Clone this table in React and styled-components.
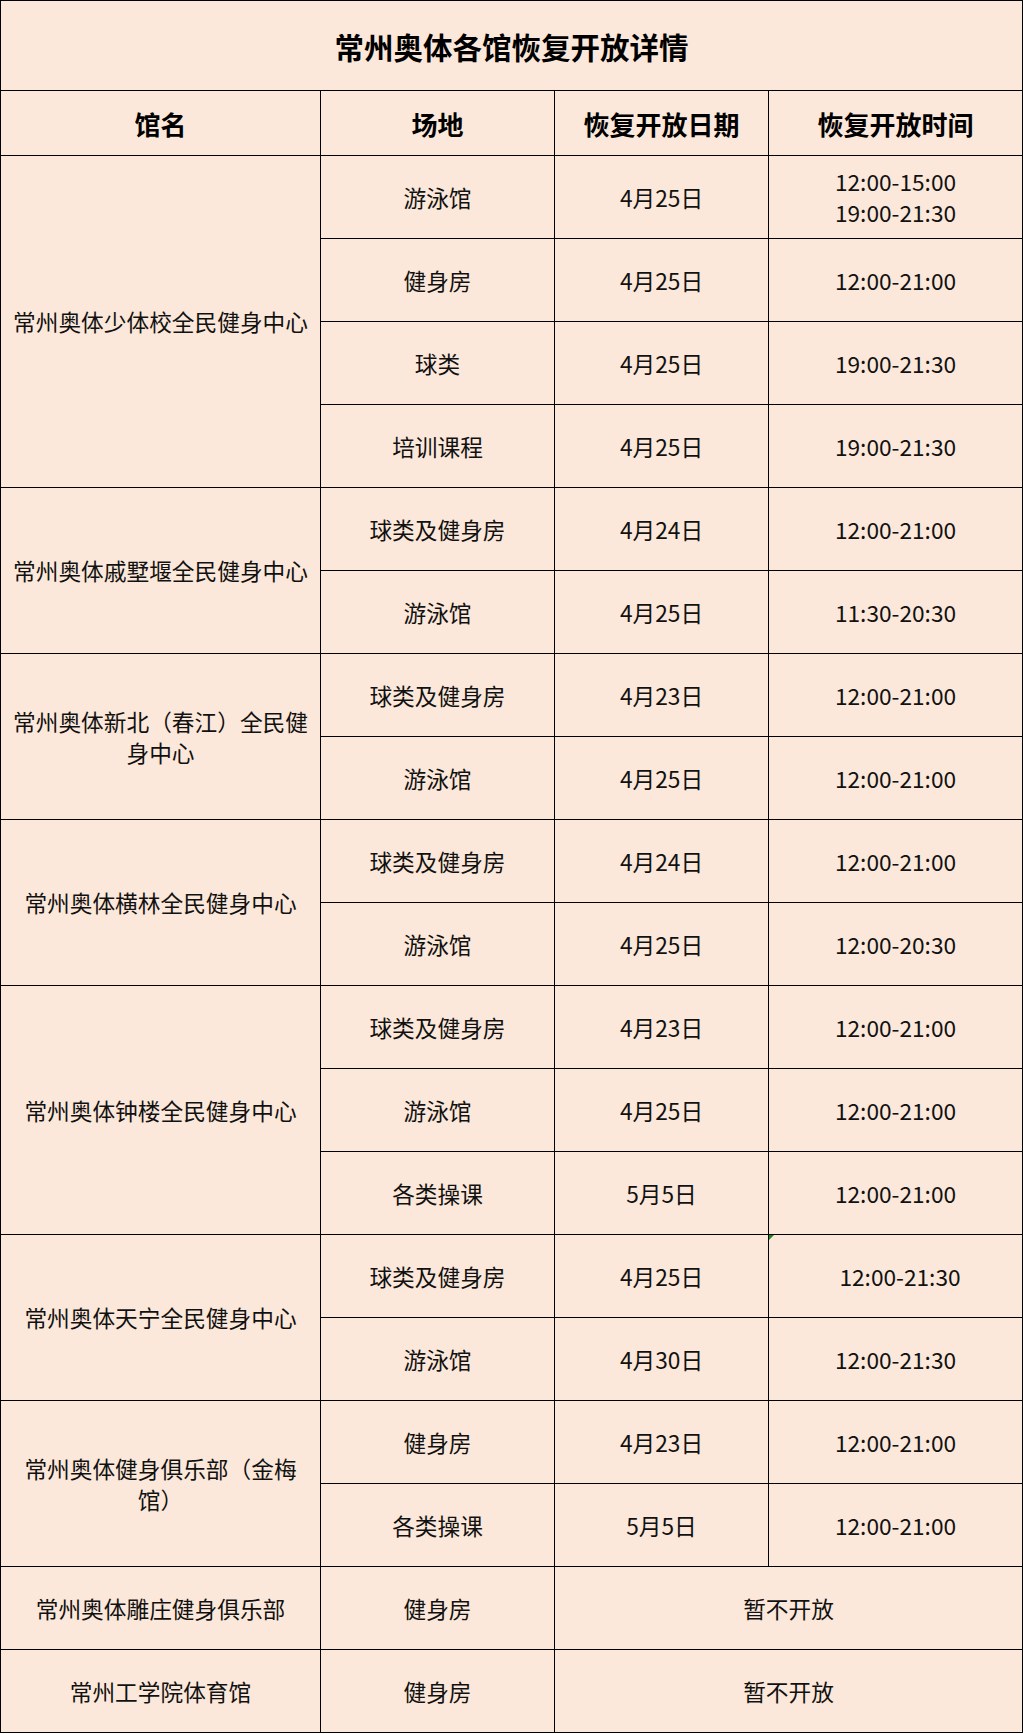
import React from "react";
import styled, { createGlobalStyle } from "styled-components";

const venues = [
  {
    name: "常州奥体少体校全民健身中心",
    rows: [
      { place: "游泳馆", date: "4月25日", time: ["12:00-15:00", "19:00-21:30"] },
      { place: "健身房", date: "4月25日", time: ["12:00-21:00"] },
      { place: "球类", date: "4月25日", time: ["19:00-21:30"] },
      { place: "培训课程", date: "4月25日", time: ["19:00-21:30"] },
    ],
  },
  {
    name: "常州奥体戚墅堰全民健身中心",
    rows: [
      { place: "球类及健身房", date: "4月24日", time: ["12:00-21:00"] },
      { place: "游泳馆", date: "4月25日", time: ["11:30-20:30"] },
    ],
  },
  {
    name: "常州奥体新北（春江）全民健身中心",
    rows: [
      { place: "球类及健身房", date: "4月23日", time: ["12:00-21:00"] },
      { place: "游泳馆", date: "4月25日", time: ["12:00-21:00"] },
    ],
  },
  {
    name: "常州奥体横林全民健身中心",
    rows: [
      { place: "球类及健身房", date: "4月24日", time: ["12:00-21:00"] },
      { place: "游泳馆", date: "4月25日", time: ["12:00-20:30"] },
    ],
  },
  {
    name: "常州奥体钟楼全民健身中心",
    rows: [
      { place: "球类及健身房", date: "4月23日", time: ["12:00-21:00"] },
      { place: "游泳馆", date: "4月25日", time: ["12:00-21:00"] },
      { place: "各类操课", date: "5月5日", time: ["12:00-21:00"] },
    ],
  },
  {
    name: "常州奥体天宁全民健身中心",
    rows: [
      { place: "球类及健身房", date: "4月25日", time: ["12:00-21:30"], marked: true },
      { place: "游泳馆", date: "4月30日", time: ["12:00-21:30"] },
    ],
  },
  {
    name: "常州奥体健身俱乐部（金梅馆）",
    rows: [
      { place: "健身房", date: "4月23日", time: ["12:00-21:00"] },
      { place: "各类操课", date: "5月5日", time: ["12:00-21:00"] },
    ],
  },
  {
    name: "常州奥体雕庄健身俱乐部",
    rows: [{ place: "健身房", closed: "暂不开放" }],
  },
  {
    name: "常州工学院体育馆",
    rows: [{ place: "健身房", closed: "暂不开放" }],
  },
];

const App = () => {
  return (
    <>
      <GlobalStyle />
      <Table>
        <colgroup>
          <col style={{ width: 320 }} />
          <col style={{ width: 234 }} />
          <col style={{ width: 214 }} />
          <col style={{ width: 254 }} />
        </colgroup>
        <thead>
          <TitleRow>
            <TitleCell colSpan={4}>常州奥体各馆恢复开放详情</TitleCell>
          </TitleRow>
          <HeadRow>
            <HeadCell>馆名</HeadCell>
            <HeadCell>场地</HeadCell>
            <HeadCell>恢复开放日期</HeadCell>
            <HeadCell>恢复开放时间</HeadCell>
          </HeadRow>
        </thead>
        <tbody>
          {venues.map((venue) =>
            venue.rows.map((row, index) => (
              <DataRow key={venue.name + index}>
                {index === 0 && (
                  <NameCell rowSpan={venue.rows.length}>{venue.name}</NameCell>
                )}
                <Cell>{row.place}</Cell>
                {row.closed ? (
                  <Cell colSpan={2}>{row.closed}</Cell>
                ) : (
                  <>
                    <Cell>{row.date}</Cell>
                    <Cell $marked={row.marked}>
                      {row.time.map((t) => (
                        <TimeLine key={t}>{t}</TimeLine>
                      ))}
                    </Cell>
                  </>
                )}
              </DataRow>
            ))
          )}
        </tbody>
      </Table>
    </>
  );
};

const GlobalStyle = createGlobalStyle`
  html, body {
    margin: 0;
    padding: 0;
    background: #ffffff;
  }
  body {
    font-family: "Noto Sans CJK SC", "Noto Sans", sans-serif;
  }
`;

const Table = styled.table`
  width: 1022px;
  table-layout: fixed;
  border-collapse: collapse;
  background-color: #fce8da;
  color: #111;
  text-spacing-trim: space-all;
`;

const TitleRow = styled.tr`
  height: 90px;
`;

const HeadRow = styled.tr`
  height: 65px;
`;

const DataRow = styled.tr`
  height: 83px;
`;

const Cell = styled.td`
  position: relative;
  border: 1px solid #000;
  padding: 0 4px;
  padding-left: ${(p) => (p.$marked ? "13px" : "4px")};
  text-align: center;
  vertical-align: middle;
  font-size: 22.7px;
  line-height: 31px;
  box-sizing: border-box;

  &::before {
    content: "";
    display: ${(p) => (p.$marked ? "block" : "none")};
    position: absolute;
    top: 0;
    left: 0;
    width: 0;
    height: 0;
    border-top: 5px solid #1a8a1a;
    border-right: 5px solid transparent;
  }
`;

const NameCell = styled(Cell)`
  padding: 0 5px;
`;

const HeadCell = styled.th`
  border: 1px solid #000;
  text-align: center;
  vertical-align: middle;
  font-size: 26px;
  font-weight: 700;
  color: #000;
`;

const TitleCell = styled.th`
  border: 1px solid #000;
  text-align: center;
  vertical-align: middle;
  font-size: 29.5px;
  font-weight: 700;
  color: #000;
`;

const TimeLine = styled.div`
  white-space: nowrap;
`;

export default App;
